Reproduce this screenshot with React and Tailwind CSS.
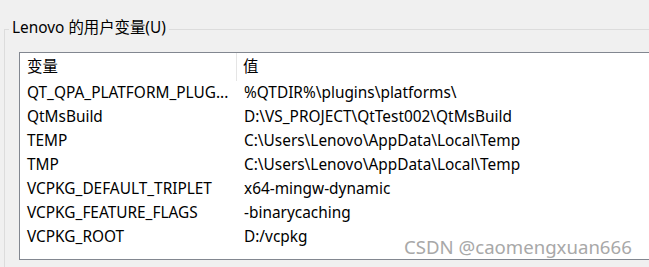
import React from 'react';

const rows = [
  ["QT_QPA_PLATFORM_PLUG...", "%QTDIR%\\plugins\\platforms\\"],
  ["QtMsBuild", "D:\\VS_PROJECT\\QtTest002\\QtMsBuild"],
  ["TEMP", "C:\\Users\\Lenovo\\AppData\\Local\\Temp"],
  ["TMP", "C:\\Users\\Lenovo\\AppData\\Local\\Temp"],
  ["VCPKG_DEFAULT_TRIPLET", "x64-mingw-dynamic"],
  ["VCPKG_FEATURE_FLAGS", "-binarycaching"],
  ["VCPKG_ROOT", "D:/vcpkg"],
];

const font = { fontFamily: '"Noto Sans", "Noto Sans CJK SC", sans-serif' };

export default function App() {
  return (
    <div
      className="w-[649px] h-[267px] bg-[#f0f0f0] overflow-hidden relative text-[15.4px] text-black"
      style={font}
    >
      {/* group box */}
      <div className="absolute left-[4px] top-[29px] w-[700px] h-[300px] border border-[#dcdcdc]" />
      <div className="absolute left-[9px] top-[17px] px-[3px] bg-[#f0f0f0] leading-[22px]">
        Lenovo 的用户变量(U)
      </div>

      {/* list view */}
      <div className="absolute left-[19px] top-[52px] w-[700px] h-[208px] bg-white border border-[#828790]">
        <div className="flex h-[28px] items-center">
          <div className="w-[217px] pl-[7px] border-r border-[#e5e5e5] h-full flex items-center">变量</div>
          <div className="pl-[6px]">值</div>
        </div>
        <div className="flex flex-col">
          {rows.map(([k, v], i) => (
            <div key={i} className="flex h-[24px] items-center leading-[24px]">
              <div className="w-[217px] pl-[7px] whitespace-nowrap">{k}</div>
              <div className="pl-[7px] whitespace-nowrap">{v}</div>
            </div>
          ))}
        </div>
      </div>

      <div className="absolute left-[404px] top-[236px] text-[18.6px] text-[#a8a8a8] leading-[22px] whitespace-nowrap">
        CSDN @caomengxuan666
      </div>
    </div>
  );
}
